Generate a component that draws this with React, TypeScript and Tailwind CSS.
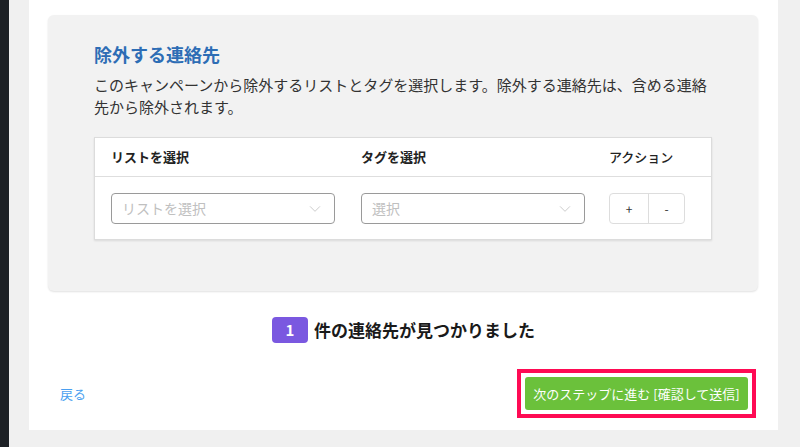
const font = { fontFamily: '"Noto Sans CJK JP", "Noto Sans", sans-serif' };

function ChevronDown() {
  return (
    <svg className="w-[14px] h-[14px] text-[#c4c4c4]" viewBox="0 0 24 24" fill="none" stroke="currentColor" strokeWidth={1.5}>
      <path d="M4 8l8 8 8-8" strokeLinecap="round" strokeLinejoin="round" />
    </svg>
  );
}

function SelectBox({ placeholder }: { placeholder: string }) {
  return (
    <div className="w-[224px] h-[31px] border border-[#9a9a9a] rounded-[4px] bg-white flex items-center justify-between pl-[10px] pr-[12px]">
      <span className="text-[14px] text-[#c0c0c0]">{placeholder}</span>
      <ChevronDown />
    </div>
  );
}

export default function App() {
  return (
    <div className="flex w-[800px] h-[447px] bg-[#f0f0f0] overflow-hidden" style={font}>
      <div className="w-[9px] h-full bg-[#1d2125]" />
      <div className="ml-[20px] w-[749px] h-[430px] bg-white flex flex-col">
        {/* exclude contacts card */}
        <div className="mt-[15px] mx-[19px] w-[710px] h-[276px] bg-[#f2f2f2] rounded-md shadow-[0_1px_2px_rgba(0,0,0,0.12)] px-[46px] pt-[26px]">
          <h2 className="text-[18px] leading-[26px] font-bold text-[#2d6db5]">除外する連絡先</h2>
          <p className="mt-[7px] text-[15px] leading-[22px] text-[#333]">
            このキャンペーンから除外するリストとタグを選択します。除外する連絡先は、含める連絡先から除外されます。
          </p>
          <div className="mt-[19px] bg-white border border-[#dcdcdc] shadow-[0_1px_2px_rgba(0,0,0,0.1)]">
            <div className="grid grid-cols-[250px_248px_1fr] pl-[16px] h-[39px] items-center border-b border-[#dedede] text-[13px] text-[#222]">
              <span className="font-bold">リストを選択</span>
              <span className="font-bold">タグを選択</span>
              <span className="font-medium">アクション</span>
            </div>
            <div className="grid grid-cols-[250px_248px_1fr] pl-[16px] pt-[16px] pb-[15px] items-center">
              <SelectBox placeholder="リストを選択" />
              <SelectBox placeholder="選択" />
              <div className="flex w-[76px] h-[31px] border border-[#dddddd] rounded-[4px] bg-white text-[12px] text-[#333]">
                <button className="w-[39px] h-full flex items-center justify-center border-r border-[#dddddd]">+</button>
                <button className="flex-1 h-full flex items-center justify-center">-</button>
              </div>
            </div>
          </div>
        </div>

        {/* result count */}
        <div className="mt-[26px] flex items-center justify-center gap-[6px]">
          <span className="w-[36px] h-[26px] rounded-[4px] bg-[#7a58e0] text-white text-[15px] font-bold flex items-center justify-center">1</span>
          <span className="text-[17px] font-bold text-[#1a1a1a]">件の連絡先が見つかりました</span>
        </div>

        {/* footer */}
        <div className="mt-[26px] flex items-center justify-between pl-[31px] pr-[22px]">
          <a className="text-[13px] text-[#4a9ff0]">戻る</a>
          <div className="border-4 border-[#ff0a54] p-[4px]">
            <button className="w-[223px] h-[33px] rounded-[3px] bg-[#6bc13b] text-white text-[13px]">次のステップに進む [確認して送信]</button>
          </div>
        </div>
      </div>
    </div>
  );
}
